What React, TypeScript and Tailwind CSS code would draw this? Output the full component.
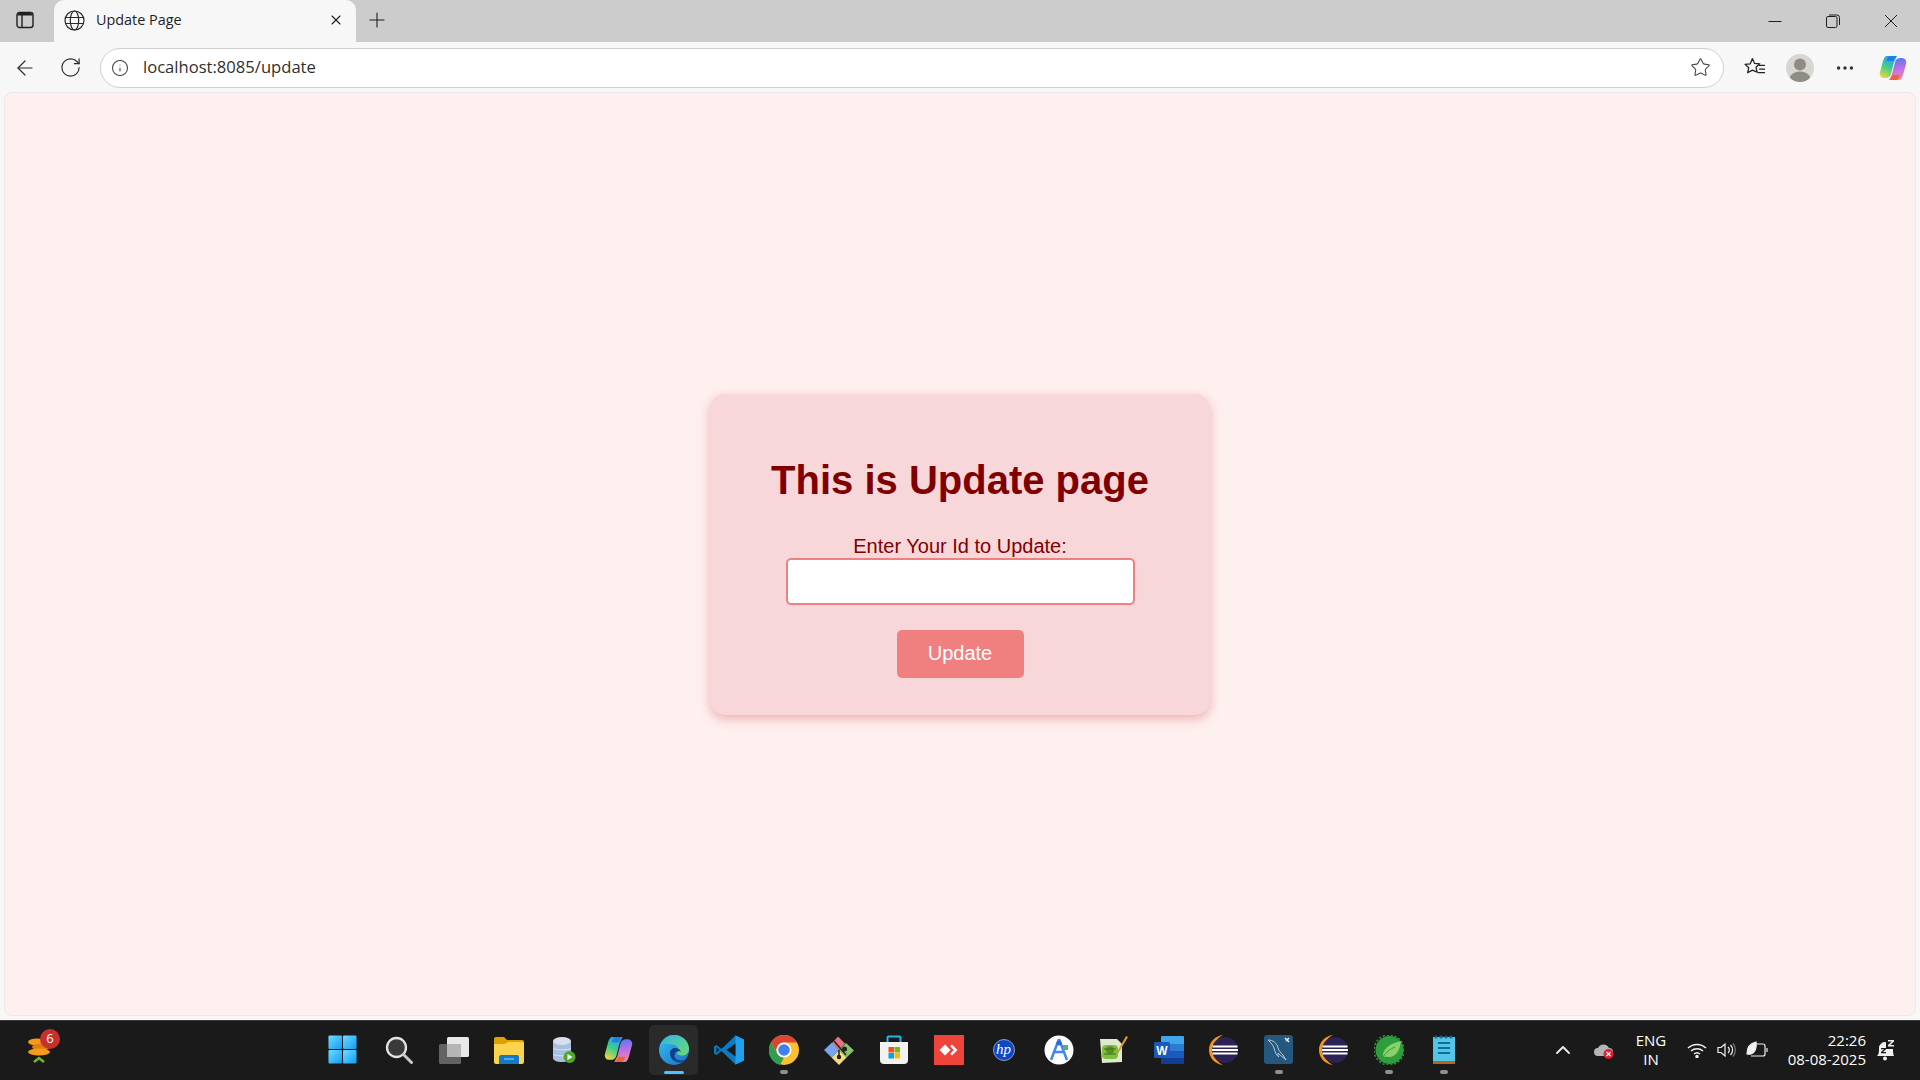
import React from "react";
import { ArrowLeft, ChevronUp, Info, MoreHorizontal, Plus, RotateCw, Star, X } from "lucide-react";

const uiFont = "font-['Open_Sans','Noto_Sans',sans-serif]";

function TabsIcon() {
  return (
    <svg width="18" height="18" viewBox="0 0 18 18" fill="none">
      <rect x="1" y="1.5" width="16" height="15" rx="2.5" stroke="#1f1f1f" strokeWidth="1.4" />
      <path d="M1.5 4.5V4a2.5 2.5 0 0 1 2.5-2h10a2.5 2.5 0 0 1 2.5 2v.5z" fill="#1f1f1f" />
      <path d="M6 4v12" stroke="#1f1f1f" strokeWidth="1.4" />
    </svg>
  );
}

function GlobeIcon() {
  return (
    <svg width="21" height="21" viewBox="0 0 21 21" fill="none" stroke="#2b2b2b" strokeWidth="1.2">
      <circle cx="10.5" cy="10.5" r="9.5" />
      <ellipse cx="10.5" cy="10.5" rx="4.2" ry="9.5" />
      <path d="M1.5 7.5h18M1.5 13.5h18" />
    </svg>
  );
}

function WindowControls() {
  return (
    <div className="ml-auto flex h-full items-center pb-[1px]">
      <div className="flex w-[58px] justify-center">
        <svg width="14" height="14" viewBox="0 0 14 14"><path d="M0.5 7.5h13" stroke="#1f1f1f" strokeWidth="1" /></svg>
      </div>
      <div className="flex w-[58px] justify-center">
        <svg width="14" height="14" viewBox="0 0 14 14" fill="none" stroke="#1f1f1f" strokeWidth="1">
          <rect x="0.5" y="2.5" width="10.5" height="11" rx="1.5" />
          <path d="M3 1h8a2.5 2.5 0 0 1 2.5 2.5V11" />
        </svg>
      </div>
      <div className="flex w-[58px] justify-center">
        <svg width="14" height="14" viewBox="0 0 14 14"><path d="M1 1l12 12M13 1L1 13" stroke="#1f1f1f" strokeWidth="1" /></svg>
      </div>
    </div>
  );
}

function CopilotIcon({ size, id }: { size: number; id: string }) {
  return (
    <svg width={size} height={size} viewBox="0 0 28 28">
      <defs>
        <linearGradient id={`${id}A`} x1="0.6" y1="0" x2="0.2" y2="1">
          <stop offset="0" stopColor="#2b9cf2" />
          <stop offset="0.5" stopColor="#3fcf8a" />
          <stop offset="1" stopColor="#f5d33b" />
        </linearGradient>
        <linearGradient id={`${id}B`} x1="0.5" y1="0" x2="0.6" y2="1">
          <stop offset="0" stopColor="#5a78f0" />
          <stop offset="0.5" stopColor="#c26fe6" />
          <stop offset="1" stopColor="#f38aa8" />
        </linearGradient>
      </defs>
      <path d="M8 2h10l-3 6-3 12c-1 3-3 4-5 4H5C2 24 0 21 1 18L4 7C5 4 6 2 8 2z" fill={`url(#${id}A)`} />
      <path d="M20 26H10l3-6 3-12c1-3 3-4 5-4h2c3 0 5 3 4 6l-3 11c-1 3-2 5-4 5z" fill={`url(#${id}B)`} />
      <path d="M10 26c2-.5 3-3 3.500-5h7c-.5 2-1 5-3.500 5z" fill="#f2603c" />
      <path d="M18 2c-2 .5-3 3-3.500 5h-7C8.500 4 9.500 2 11 2z" fill="#1d7fe8" />
    </svg>
  );
}

function BrowserChrome() {
  return (
    <>
      <div className={`flex h-[42px] items-end bg-[#cccccc] ${uiFont}`}>
        <div className="flex h-[42px] w-[50px] items-center justify-center pb-[3px]">
          <TabsIcon />
        </div>
        <div className="ml-[4px] flex h-[42px] w-[302px] items-center rounded-t-[10px] bg-[#f7f7f7] pr-[12px] pb-[2px] pl-[10px]">
          <GlobeIcon />
          <span className="ml-[11px] text-[14.4px] text-[#1f1f1f]">Update Page</span>
          <X className="ml-auto" size={16} strokeWidth={1.6} color="#1f1f1f" />
        </div>
        <div className="flex h-[42px] w-[42px] items-center justify-center pb-[3px]">
          <Plus size={24} strokeWidth={1.1} color="#1f1f1f" />
        </div>
        <WindowControls />
      </div>
      <div className={`flex h-[50px] items-center bg-[#f7f7f7] pt-[1px] ${uiFont}`}>
        <div className="flex w-[48px] justify-center pl-[2px]">
          <ArrowLeft size={24} strokeWidth={1.2} color="#2b2b2b" />
        </div>
        <div className="flex w-[44px] justify-center">
          <RotateCw size={23} strokeWidth={1.2} color="#2b2b2b" />
        </div>
        <div className="ml-[8px] flex h-[40px] w-[1624px] items-center rounded-full border border-[#cfcfcf] bg-white pr-[12px] pl-[10px]">
          <Info size={18} strokeWidth={1.4} color="#444444" />
          <span className="ml-[14px] text-[16.6px] text-[#303030]">localhost:8085/update</span>
          <Star className="ml-auto" size={21} strokeWidth={1.2} color="#444444" />
        </div>
        <div className="ml-[19px] flex w-[24px] justify-center">
          <svg width="22" height="22" viewBox="0 0 21 21" fill="none" stroke="#222222" strokeWidth="1.2">
            <path d="M8 1.500l2 4.500 5 .500-3.500 3.300 1 4.700L8 12.500 3.500 15l1-4.700L1 7l5-.500z" strokeLinejoin="round" />
            <path d="M14 8h6M14.500 11.500h5.500M13 15h7" />
          </svg>
        </div>
        <div className="ml-[19px] flex h-[28px] w-[28px] items-center justify-center overflow-hidden rounded-full bg-[#d8d6d2]">
          <svg width="28" height="28" viewBox="0 0 28 28" fill="#8f8b85">
            <circle cx="14" cy="10.500" r="6" />
            <ellipse cx="14" cy="24" rx="10" ry="6.500" />
          </svg>
        </div>
        <div className="ml-[19px] flex w-[24px] justify-center">
          <MoreHorizontal size={22} strokeWidth={1.8} color="#333333" />
        </div>
        <div className="ml-[22px]">
          <CopilotIcon size={28} id="cpTop" />
        </div>
      </div>
    </>
  );
}

function UpdateCard() {
  return (
    <div className="flex w-[500px] flex-col items-center rounded-[15px] bg-[#f8d7da] pt-[63px] pb-[37px] font-['Liberation_Sans',Arial,sans-serif] shadow-[0_4px_12px_rgba(200,60,60,0.35)]">
      <h1 className="text-[40px] leading-[46px] font-bold text-[#800000]">This is Update page</h1>
      <label htmlFor="updateId" className="mt-[32px] text-[20px] leading-[23px] text-[#800000]">
        Enter Your Id to Update:
      </label>
      <input
        id="updateId"
        className="h-[47px] w-[349px] rounded-[5px] border-2 border-[#f08080] bg-white px-[10px] text-[18px]"
      />
      <button className="mt-[25px] h-[48px] w-[127px] rounded-[5px] bg-[#f08080] pb-[2px] text-[20px] text-white">Update</button>
    </div>
  );
}

function StartIcon() {
  return (
    <svg className="mr-[2px]" width="29" height="29" viewBox="0 0 30 30">
      <defs>
        <linearGradient id="winA" x1="0" y1="0" x2="1" y2="1">
          <stop offset="0" stopColor="#6fdcff" />
          <stop offset="1" stopColor="#0f9cf5" />
        </linearGradient>
      </defs>
      <rect x="0.500" y="0.500" width="14" height="14" rx="1" fill="url(#winA)" />
      <rect x="15.500" y="0.500" width="14" height="14" rx="1" fill="url(#winA)" />
      <rect x="0.500" y="15.500" width="14" height="14" rx="1" fill="url(#winA)" />
      <rect x="15.500" y="15.500" width="14" height="14" rx="1" fill="url(#winA)" />
    </svg>
  );
}

function SearchIcon() {
  return (
    <svg width="28" height="28" viewBox="0 0 28 28" fill="none">
      <circle cx="11.500" cy="11.500" r="9.500" fill="#3a3a3a" stroke="#e4e4e4" strokeWidth="2.300" />
      <path d="M18.500 18.500l8 8" stroke="#c9c9c9" strokeWidth="3" strokeLinecap="round" />
    </svg>
  );
}

function TaskViewIcon() {
  return (
    <svg width="30" height="28" viewBox="0 0 30 28">
      <rect x="8" y="1" width="22" height="20" rx="1.500" fill="#e8e8e8" />
      <rect x="0" y="8" width="22" height="20" rx="1.500" fill="#6a6a6a" fillOpacity="0.9" />
      <rect x="8" y="8" width="14" height="13" fill="#b5b5b5" />
    </svg>
  );
}

function ExplorerIcon() {
  return (
    <svg width="30" height="28" viewBox="0 0 30 28">
      <path d="M0 3a2 2 0 0 1 2-2h8l3 3h15a2 2 0 0 1 2 2v4H0z" fill="#e0a100" />
      <path d="M0 8h11l3-2h14a2 2 0 0 1 2 2v18a2 2 0 0 1-2 2H2a2 2 0 0 1-2-2z" fill="#fcd34d" />
      <path d="M5 21a2 2 0 0 1 2-2h16a2 2 0 0 1 2 2v7H5z" fill="#1379c9" />
      <path d="M10 23h10" stroke="#74c0f2" strokeWidth="1.400" />
    </svg>
  );
}

function DbIcon() {
  return (
    <svg width="24" height="28" viewBox="0 0 24 28">
      <path d="M1 5v17c0 2.500 4 4 9 4s9-1.500 9-4V5z" fill="#a8bfe0" />
      <ellipse cx="10" cy="5" rx="9" ry="4" fill="#d5dfee" />
      <path d="M1 12c1.500 2.500 16.500 2.500 18 0M1 18c1.500 2.500 16.500 2.500 18 0" stroke="#dbe5f2" fill="none" />
      <circle cx="17.500" cy="21" r="6" fill="#4ea82c" />
      <path d="M15.500 18l5 3-5 3z" fill="#ffffff" />
    </svg>
  );
}

function EdgeIcon() {
  return (
    <svg width="30" height="30" viewBox="0 0 30 30">
      <defs>
        <linearGradient id="edgeA" x1="0" y1="0" x2="1" y2="1">
          <stop offset="0" stopColor="#35c1f1" />
          <stop offset="1" stopColor="#1b6fc4" />
        </linearGradient>
        <linearGradient id="edgeB" x1="0" y1="0" x2="1" y2="1">
          <stop offset="0" stopColor="#2fb7e8" />
          <stop offset="1" stopColor="#6fdc6a" />
        </linearGradient>
      </defs>
      <circle cx="15" cy="15" r="15" fill="url(#edgeA)" />
      <path d="M2 10C4 3 10 0 15 0c9 0 15 6.500 15 14 0 4-3 6.500-7 6.500-3 0-5-1-5-2.500 3-1.500 2-7.500-4-8.500C9 8.500 4 8 2 10z" fill="url(#edgeB)" />
      <path d="M11 18c0 6 5 10 11 9.500 2-.3 3.500-1.500 4-2.500-6 2-12-1-10-6.500 1-2.500 4-3.500 6-1.500-1-3-3.500-4-6-4s-5 2-5 5z" fill="#123f88" />
    </svg>
  );
}

function VsCodeIcon() {
  return (
    <svg width="30" height="30" viewBox="0 0 30 30">
      <path d="M21.500 0.500L30 4.500v21l-8.500 4-14-13.500L2.500 20 0 18.500v-7L2.500 10l5 4z" fill="#0a7bc4" />
      <path d="M21.500 0.500L30 4.500v21l-8.500 4z" fill="#1fa0ef" />
      <path d="M21.500 8.500v13L12.500 15z" fill="#1a1a1a" />
      <path d="M2.500 12l3 3-3 3z" fill="#1a1a1a" />
    </svg>
  );
}

function ChromeIcon() {
  return (
    <svg width="30" height="30" viewBox="0 0 30 30">
      <circle cx="15" cy="15" r="15" fill="#fbc02d" />
      <path d="M15 0a15 15 0 0 1 13 7.500H15a7.500 7.500 0 0 0-6.500 11.300L2 7.500A15 15 0 0 1 15 0z" fill="#db4437" />
      <path d="M2 7.500l6.500 11.300A7.500 7.500 0 0 0 15 22.500L11 30A15 15 0 0 1 2 7.500z" fill="#2f9e52" />
      <circle cx="15" cy="15" r="7.500" fill="#ffffff" />
      <circle cx="15" cy="15" r="5.800" fill="#3f7ff0" />
    </svg>
  );
}

function GitIcon() {
  return (
    <svg width="30" height="30" viewBox="0 0 30 30">
      <path d="M15 15L8 8l6-6.500 7 7z" fill="#e9737a" />
      <path d="M15 15l7-7 8 7.500-7.500 7z" fill="#85c468" />
      <path d="M15 15l7.500 7.500-7.500 7.500-7.500-7.500z" fill="#f4dc7e" />
      <path d="M15 15l-7.500 7.500L0 15l8-7.500z" fill="#76a4ee" />
      <path d="M10 6l12 14M15 15v8" stroke="#222222" strokeWidth="1.500" />
      <circle cx="20.500" cy="14" r="2.500" fill="#222222" />
      <circle cx="15" cy="22" r="2.200" fill="#222222" />
    </svg>
  );
}

function StoreIcon() {
  return (
    <svg width="30" height="30" viewBox="0 0 30 30">
      <path d="M8.500 7V2.500a1 1 0 0 1 1-1h11a1 1 0 0 1 1 1V7" fill="none" stroke="#26b5e8" strokeWidth="2" />
      <path d="M1 7h28v18a4 4 0 0 1-4 4H5a4 4 0 0 1-4-4z" fill="#f2f2f2" />
      <rect x="9.500" y="12" width="5.500" height="5.500" fill="#f25022" />
      <rect x="15.500" y="12" width="5.500" height="5.500" fill="#7fba00" />
      <rect x="9.500" y="18" width="5.500" height="5.500" fill="#00a4ef" />
      <rect x="15.500" y="18" width="5.500" height="5.500" fill="#ffb900" />
    </svg>
  );
}

function AnyDeskIcon() {
  return (
    <svg width="30" height="30" viewBox="0 0 30 30">
      <rect width="30" height="30" fill="#ef443b" />
      <path d="M11 9.500l5.500 5.500-5.500 5.500L5.500 15z" fill="#ffffff" />
      <path d="M18 9.500l5.500 5.500-5.500 5.500-1.800-1.800 3.700-3.700-3.700-3.700z" fill="#ffffff" />
    </svg>
  );
}

function HpIcon() {
  return (
    <div className="flex h-[22px] w-[22px] items-center justify-center rounded-full border border-[#8a9bc9] bg-[#0d47c4] font-['Liberation_Serif',serif] text-[15px] text-white italic">
      hp
    </div>
  );
}

function StudioIcon() {
  return (
    <svg width="30" height="30" viewBox="0 0 30 30">
      <circle cx="15" cy="15" r="14.500" fill="#ffffff" />
      <path d="M15 4l-8 21M15 4l8 21M9 17h12" stroke="#4285f4" strokeWidth="2.500" fill="none" />
      <circle cx="15" cy="8" r="2.500" fill="#3367c8" />
      <rect x="19" y="10" width="5" height="5" fill="#57b06b" />
    </svg>
  );
}

function NotepadPlusIcon() {
  return (
    <svg width="28" height="28" viewBox="0 0 28 28">
      <path d="M0 3h17l5 5v18l-20 1z" fill="#dfe8d0" />
      <rect x="2" y="9" width="16" height="14" rx="4" fill="#7ec03c" />
      <circle cx="10" cy="14" r="4" fill="#5e8f2a" />
      <path d="M4 13h12M4 18h12" stroke="#3f6a1e" strokeWidth="1" />
      <path d="M26 0l2 1-9 15-2 3 .500-4z" fill="#d69b2d" />
    </svg>
  );
}

function WordIcon() {
  return (
    <svg width="30" height="28" viewBox="0 0 30 28">
      <path d="M7 1a1 1 0 0 1 1-1h21a1 1 0 0 1 1 1v7H7z" fill="#41a5ee" />
      <rect x="7" y="8" width="23" height="7" fill="#2b7cd3" />
      <rect x="7" y="15" width="23" height="7" fill="#185abd" />
      <path d="M7 22h23v5a1 1 0 0 1-1 1H8a1 1 0 0 1-1-1z" fill="#103f91" />
      <rect x="0" y="6" width="16" height="16" rx="1.500" fill="#185abd" />
      <text x="8" y="18.500" textAnchor="middle" fontSize="12" fontWeight="700" fill="#ffffff" fontFamily="Liberation Sans">W</text>
    </svg>
  );
}

function EclipseIcon() {
  return (
    <svg width="30" height="30" viewBox="0 0 30 30">
      <path d="M14 0C6 1 0 7 0 15s6 14 14 15c-5-2-9-8-9-15S9 2 14 0z" fill="#f7941e" />
      <circle cx="16" cy="15" r="13" fill="#2c2255" />
      <rect x="3.500" y="10.500" width="25" height="2" fill="#ffffff" />
      <rect x="3" y="14" width="26" height="2" fill="#ffffff" />
      <rect x="3.500" y="17.500" width="25" height="2" fill="#ffffff" />
    </svg>
  );
}

function MySqlIcon() {
  return (
    <svg width="30" height="30" viewBox="0 0 30 30">
      <rect width="29" height="29" rx="3" fill="#24587f" />
      <path d="M4 5c5 0 9 3 10 8 1 3 3 5 5 7l3 5c-3-3-5-4-8-7 0 2 0 3 1 4-3-2-4-5-5-9-1-3-3-5-6-8z" fill="none" stroke="#b5cbdb" strokeWidth="1" />
      <path d="M21 3l4 4M25 3l-3 3" stroke="#e2edf4" strokeWidth="1.500" />
    </svg>
  );
}

function SpringIcon() {
  return (
    <svg width="30" height="30" viewBox="0 0 30 30">
      <circle cx="15.500" cy="15" r="14" fill="#2e9e3c" />
      <circle cx="15" cy="15" r="15" fill="none" stroke="#2e9e3c" strokeWidth="1.500" strokeDasharray="2 2" />
      <path d="M9 22c-1-7 5-13 18-16-1 9-5 16-12 16-2 0-4-.500-6 0z" fill="#8ad16a" />
      <path d="M9 22c3-5 7-8 12-10" stroke="#2e9e3c" strokeWidth="1" fill="none" />
    </svg>
  );
}

function NotepadIcon() {
  return (
    <svg width="24" height="30" viewBox="0 0 24 30">
      <rect x="1" y="2" width="22" height="26" fill="#54c4e8" />
      <rect x="1" y="26" width="22" height="3" fill="#b5651d" />
      <circle cx="4" cy="2" r="1.600" fill="#0f6c94" />
      <circle cx="9" cy="2" r="1.600" fill="#0f6c94" />
      <circle cx="14" cy="2" r="1.600" fill="#0f6c94" />
      <circle cx="19" cy="2" r="1.600" fill="#0f6c94" />
      <path d="M6 8h12M6 13h12M6 18h12" stroke="#0f6c94" strokeWidth="2" />
    </svg>
  );
}

function CoinsWidget() {
  return (
    <div className="relative flex h-full w-[62px] items-center justify-center pb-[2px] pl-[18px]">
      <svg width="24" height="30" viewBox="0 0 24 30">
        <ellipse cx="9" cy="7" rx="9" ry="3.500" fill="#f59a1c" />
        <ellipse cx="13" cy="12" rx="9" ry="3.500" fill="#e07f10" />
        <ellipse cx="11" cy="17" rx="11" ry="3.500" fill="#f59a1c" />
        <path d="M6 27l5-4 5 4" stroke="#76b82a" strokeWidth="2.500" fill="none" />
      </svg>
      <div className="absolute top-[8px] left-[40px] flex h-[20px] w-[20px] items-center justify-center rounded-full bg-[#c9302a] text-[13px] text-white">
        6
      </div>
    </div>
  );
}

const apps = [
  { key: "start", icon: <StartIcon /> },
  { key: "search", icon: <SearchIcon /> },
  { key: "taskview", icon: <TaskViewIcon /> },
  { key: "explorer", icon: <ExplorerIcon /> },
  { key: "db", icon: <DbIcon /> },
  { key: "copilot", icon: <CopilotIcon size={29} id="cpBar" /> },
  { key: "edge", icon: <EdgeIcon />, active: true },
  { key: "vscode", icon: <VsCodeIcon /> },
  { key: "chrome", icon: <ChromeIcon />, running: true },
  { key: "git", icon: <GitIcon /> },
  { key: "store", icon: <StoreIcon /> },
  { key: "anydesk", icon: <AnyDeskIcon /> },
  { key: "hp", icon: <HpIcon /> },
  { key: "studio", icon: <StudioIcon /> },
  { key: "npp", icon: <NotepadPlusIcon /> },
  { key: "word", icon: <WordIcon /> },
  { key: "eclipse", icon: <EclipseIcon /> },
  { key: "mysql", icon: <MySqlIcon />, running: true },
  { key: "eclipse2", icon: <EclipseIcon /> },
  { key: "spring", icon: <SpringIcon />, running: true },
  { key: "notepad", icon: <NotepadIcon />, running: true },
];

function Taskbar() {
  return (
    <div className={`flex h-[60px] items-center border-t border-[#3a3a3a] bg-[#1a1a1a] ${uiFont}`}>
      <CoinsWidget />
      <div className="ml-[254px] flex h-full items-center pb-[2px]">
        {apps.map((app) => (
          <div key={app.key} className="relative flex h-[50px] w-[55px] items-center justify-center">
            {app.active && <div className="absolute inset-x-[3px] inset-y-0 rounded-[5px] bg-[#2a2a2a]" />}
            <div className="relative flex items-center justify-center">{app.icon}</div>
            {app.active && <div className="absolute bottom-[1px] left-[18px] h-[3px] w-[20px] rounded-full bg-[#4cc2ff]" />}
            {app.running && <div className="absolute bottom-[1px] left-[24px] h-[4px] w-[8px] rounded-full bg-[#8f8f8f]" />}
          </div>
        ))}
      </div>
      <div className="ml-auto flex h-full items-center pb-[2px] text-white">
        <ChevronUp size={24} strokeWidth={1.8} color="#f0f0f0" />
        <div className="relative ml-[19px] h-[20px] w-[20px]">
          <svg width="20" height="20" viewBox="0 0 20 20">
            <path d="M4 16a4 4 0 0 1 0-8 6 6 0 0 1 11 0 4 4 0 0 1 0 8z" fill="#b5b5b5" />
            <circle cx="14.500" cy="14" r="5" fill="#e01e32" />
            <path d="M12.500 12l4 4M16.500 12l-4 4" stroke="#ffffff" strokeWidth="1.200" />
          </svg>
        </div>
        <div className="ml-[19px] flex w-[36px] flex-col items-center text-[15px] leading-[19px]">
          <span>ENG</span>
          <span>IN</span>
        </div>
        <svg className="ml-[18px]" width="20" height="16" viewBox="0 0 20 16" fill="none" stroke="#f0f0f0" strokeWidth="1.500">
          <path d="M1 6a13 13 0 0 1 18 0M4 9a9 9 0 0 1 12 0M7 12a4.500 4.500 0 0 1 6 0" />
          <circle cx="10" cy="14.500" r="1" fill="#f0f0f0" />
        </svg>
        <svg className="ml-[10px]" width="20" height="16" viewBox="0 0 20 16" fill="none" stroke="#f0f0f0" strokeWidth="1.200">
          <path d="M1 5.500h3L8 2v12l-4-3.500H1z" />
          <path d="M11 5a4 4 0 0 1 0 6M13.500 3a7 7 0 0 1 0 10" />
          <path d="M16 1.500a10 10 0 0 1 0 13" stroke="#777777" />
        </svg>
        <svg className="ml-[9px]" width="22" height="18" viewBox="0 0 22 18" fill="none" stroke="#f0f0f0" strokeWidth="1.200">
          <path d="M8 3h9a2 2 0 0 1 2 2v8a2 2 0 0 1-2 2H5" />
          <path d="M21 7v4" />
          <path d="M1 13C1 6 5 2 10 1c1 6-1 11-5 12-2 .500-3 0-4 0z" fill="#f0f0f0" />
        </svg>
        <div className="ml-[14px] flex w-[84px] flex-col items-end text-[15px] leading-[19px]">
          <span>22:26</span>
          <span>08-08-2025</span>
        </div>
        <svg className="mr-[24px] ml-[10px]" width="20" height="22" viewBox="0 0 20 22" fill="#f0f0f0">
          <path d="M1 17c2-2 2-4 2-8a6 6 0 0 1 7-5.800V10h7c0 3 0 5 1 7z" />
          <circle cx="9" cy="19.500" r="2" />
          <path d="M12 1h6v1.400L14.200 6H18v1.500h-6V6.100L15.800 2.500H12z" />
          <path d="M5 9h5v1.200L7 13h3v1.200H5v-1.200L8 10.200H5z" fill="#1a1a1a" />
        </svg>
      </div>
    </div>
  );
}

export default function App() {
  return (
    <div className="flex h-screen w-full flex-col overflow-hidden bg-[#f7f7f7]">
      <BrowserChrome />
      <div className="flex flex-1 px-[4px] pb-[4px]">
        <main className="flex flex-1 items-center justify-center rounded-[8px] border border-[#efe7e7] bg-[#fff0f0]">
          <UpdateCard />
        </main>
      </div>
      <Taskbar />
    </div>
  );
}
